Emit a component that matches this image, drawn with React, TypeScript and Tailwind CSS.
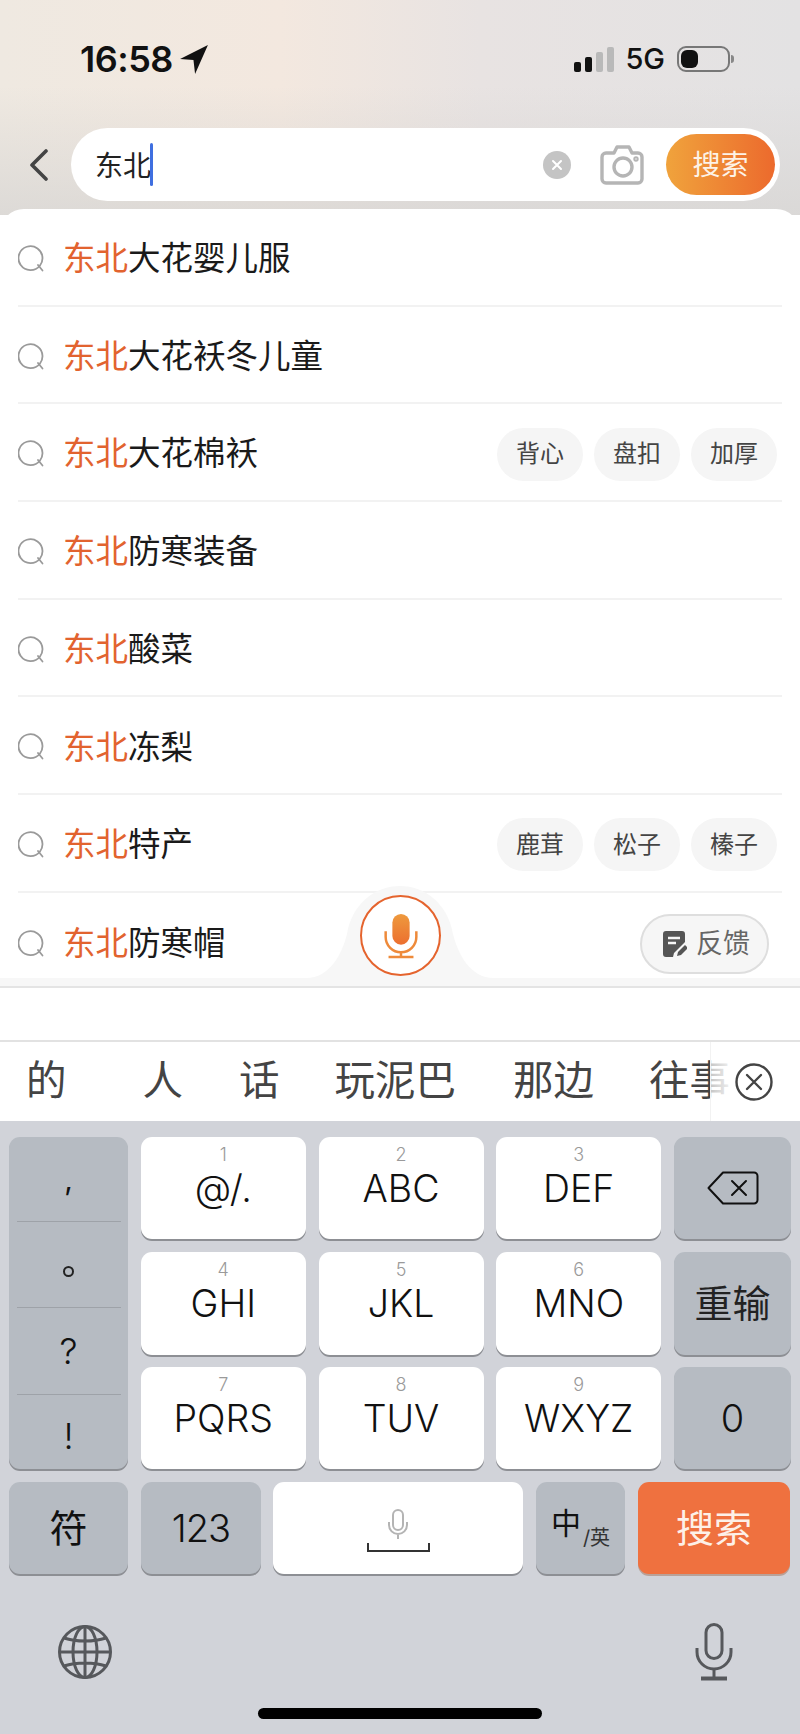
import type { ReactNode } from 'react'

const suggestions: { text: string; chips?: string[] }[] = [
  { text: '大花婴儿服' },
  { text: '大花袄冬儿童' },
  { text: '大花棉袄', chips: ['背心', '盘扣', '加厚'] },
  { text: '防寒装备' },
  { text: '酸菜' },
  { text: '冻梨' },
  { text: '特产', chips: ['鹿茸', '松子', '榛子'] },
  { text: '防寒帽' },
]

const letterKeys = [
  { n: '1', label: '@/.' },
  { n: '2', label: 'ABC' },
  { n: '3', label: 'DEF' },
  { n: '4', label: 'GHI' },
  { n: '5', label: 'JKL' },
  { n: '6', label: 'MNO' },
  { n: '7', label: 'PQRS' },
  { n: '8', label: 'TUV' },
  { n: '9', label: 'WXYZ' },
]

function SearchIcon() {
  return (
    <svg viewBox="0 0 28 28" className="w-[28px] h-[28px] shrink-0 mt-[2px]" fill="none" stroke="#9a9a9a" strokeWidth="1.8" strokeLinecap="round">
      <path d="M22 21.5A12 12 0 1 1 24.5 14a12 12 0 0 1-2.5 7.5" />
      <path d="M20 21l4.5 5.5" />
    </svg>
  )
}

function DarkKey({ className, children }: { className: string; children: ReactNode }) {
  return (
    <div className={`bg-[#b6bbc2] rounded-[11px] shadow-[0_2px_0_#8d8f94] flex items-center justify-center text-[#111] ${className}`}>
      {children}
    </div>
  )
}

function MicGlyph({ className, color }: { className: string; color: string }) {
  return (
    <svg viewBox="0 0 38 58" className={className} fill="none" stroke={color} strokeWidth="3">
      <rect x="11" y="1.5" width="16" height="34" rx="8" />
      <path d="M2 25v4a17 17 0 0 0 34 0v-4" />
      <path d="M19 46v8" />
      <path d="M6 55.5h26" strokeWidth="4" />
    </svg>
  )
}

function LetterKey({ n, label }: { n: string; label: string }) {
  return (
    <div className="bg-white rounded-[11px] shadow-[0_2px_0_#8d8f94] flex flex-col items-center pt-[8px]">
      <span className="text-[18px] leading-[20px] text-[#9a9a9a]">{n}</span>
      <span className="text-[37.5px] leading-[48px] text-[#111]">{label}</span>
    </div>
  )
}

export default function App() {
  return (
    <div className="relative w-[800px] h-[1734px] overflow-hidden flex flex-col bg-white text-[#111] font-['Inter','Noto_Sans_CJK_SC',sans-serif]">
      <div className="flex flex-col bg-[linear-gradient(180deg,rgba(224,222,220,0)_40%,rgba(216,214,212,0.8)_100%),linear-gradient(90deg,#efe9e1_0%,#f3e8df_35%,#e8e3e2_60%,#e3e2e3_100%)] bg-[length:100%_215px] bg-no-repeat">
        {/* status bar */}
        <div className="h-[128px] flex items-start justify-between pl-[80px] pr-[66px] pt-[39px]">
          <div className="flex items-center gap-[6px]">
            <span className="text-[36px] leading-[40px] font-semibold tracking-[-0.5px]">16:58</span>
            <svg viewBox="0 0 28 28" className="w-[30px] h-[30px]" fill="#111">
              <path d="M27 1L1 14l12.5 1L15 28z" />
            </svg>
          </div>
          <div className="flex items-center h-[40px]">
            <div className="flex items-end gap-[4px] h-[25px]">
              <div className="w-[7px] h-[10px] rounded-[2px] bg-[#111]" />
              <div className="w-[7px] h-[15px] rounded-[2px] bg-[#111]" />
              <div className="w-[7px] h-[20px] rounded-[2px] bg-[#b9b9b9]" />
              <div className="w-[7px] h-[25px] rounded-[2px] bg-[#b9b9b9]" />
            </div>
            <span className="ml-[11px] text-[29px] font-medium leading-[40px]">5G</span>
            <div className="ml-[12px] w-[53px] h-[26px] rounded-[9px] border-2 border-[#777] p-[2px] flex">
              <div className="w-[17px] h-full rounded-[6px] bg-[#111]" />
            </div>
            <div className="w-[3px] h-[8px] ml-[1px] rounded-r-full bg-[#888]" />
          </div>
        </div>

        {/* search row */}
        <div className="flex items-center pl-[29px] mb-[8px]">
          <svg viewBox="0 0 20 32" className="w-[20px] h-[32px]" fill="none" stroke="#444" strokeWidth="3.6" strokeLinecap="round" strokeLinejoin="round">
            <path d="M17 2L3 16l14 14" />
          </svg>
          <div className="ml-[22px] w-[709px] h-[73px] rounded-full bg-white flex items-center pl-[24px] pr-[5px]">
            <span className="text-[28px] leading-none text-[#222] mt-[2px]">东北</span>
            <div className="w-[3px] h-[43px] rounded-full bg-[#3f6fe0] -ml-[1px]" />
            <div className="ml-auto w-[28px] h-[28px] rounded-full bg-[#c4c4c4] flex items-center justify-center">
              <svg viewBox="0 0 12 12" className="w-[12px] h-[12px]" stroke="#fff" strokeWidth="2" strokeLinecap="round">
                <path d="M2 2l8 8M10 2l-8 8" />
              </svg>
            </div>
            <svg viewBox="0 0 44 40" className="ml-[29px] w-[44px] h-[40px]" fill="none" stroke="#b5b5b5" strokeWidth="3.4" strokeLinejoin="round">
              <path d="M6 8h8l3-6h12l3 6h6a4 4 0 0 1 4 4v22a4 4 0 0 1-4 4H6a4 4 0 0 1-4-4V12a4 4 0 0 1 4-4z" />
              <circle cx="23" cy="22" r="9" />
              <circle cx="36" cy="14" r="1" />
            </svg>
            <div className="ml-[22px] w-[109px] h-[61px] rounded-full bg-[linear-gradient(90deg,#f0a33c,#ec6a2d)] flex items-center justify-center text-[28px] text-[#fdf3e7]">
              搜索
            </div>
          </div>
        </div>

        {/* suggestion panel */}
        <div className="h-[769px] overflow-hidden rounded-t-[24px] bg-white">
          {suggestions.map((s, i) => (
            <div key={s.text} className={`mx-[18px] h-[97.7px] shrink-0 flex items-center ${i < 7 ? 'border-b-2 border-[#f2f2f2]' : ''}`}>
              <SearchIcon />
              <div className="ml-[17px] pt-[5px] text-[32.5px] leading-none text-[#1a1a1a]">
                <span className="text-[#e2632f]">东北</span>
                {s.text}
              </div>
              {s.chips && (
                <div className="ml-auto mr-[5px] mt-[4px] flex gap-[11px]">
                  {s.chips.map((c) => (
                    <div key={c} className="w-[86px] h-[53px] rounded-full bg-[#f5f5f5] flex items-center justify-center text-[24px] text-[#444]">
                      {c}
                    </div>
                  ))}
                </div>
              )}
            </div>
          ))}
        </div>
      </div>

      <div className="h-[10px] bg-[#f7f7f7] border-b-2 border-[#e4e4e4]" />
      <div className="h-[52px] bg-white" />

      {/* candidates */}
      <div className="relative h-[81px] bg-white border-t-2 border-[#e2e2e2] flex items-center text-[40.5px] leading-none text-[#444] overflow-hidden">
        <span className="ml-[26px]">的</span>
        <span className="ml-[76px]">人</span>
        <span className="ml-[56px]">话</span>
        <span className="ml-[55px]">玩泥巴</span>
        <span className="ml-[57px]">那边</span>
        <span className="ml-[55px] shrink-0">往事</span>
        <div className="absolute right-0 top-0 bottom-0 w-[90px] border-l border-[#f2f2f2] bg-[linear-gradient(90deg,rgba(255,255,255,0.7)_0%,#fff_30%)] flex items-center justify-end pr-[27px]">
          <svg viewBox="0 0 38 38" className="w-[38px] h-[38px]" fill="none" stroke="#444" strokeWidth="2.4" strokeLinecap="round">
            <circle cx="19" cy="19" r="17.5" />
            <path d="M12 12l14 14M26 12L12 26" />
          </svg>
        </div>
      </div>

      {/* keyboard */}
      <div className="flex-1 bg-[#d1d3d9] flex flex-col px-[9px] pt-[16px] font-light">
        <div className="grid grid-cols-[119px_165px_165px_165px_117px] grid-rows-[102px_103px_102px] gap-x-[12.75px] gap-y-[12.5px]">
          <DarkKey className="row-span-3 flex-col !justify-start">
            <div className="h-[85px] w-[104px] flex items-center justify-center text-[30px] font-normal border-b border-[#9ea2a8]">,</div>
            <div className="h-[86px] w-[104px] flex items-center justify-center border-b border-[#9ea2a8]">
              <div className="w-[11px] h-[11px] rounded-full border-2 border-[#222] mt-[14px]" />
            </div>
            <div className="h-[87px] w-[104px] flex items-center justify-center text-[36px] border-b border-[#9ea2a8]">?</div>
            <div className="h-[74px] w-[104px] flex items-center justify-center text-[36px] pt-[8px]">!</div>
          </DarkKey>
          {letterKeys.slice(0, 3).map((k) => (
            <LetterKey key={k.n} n={k.n} label={k.label} />
          ))}
          <DarkKey className="">
            <svg viewBox="0 0 52 34" className="w-[52px] h-[34px]" fill="none" stroke="#111" strokeWidth="2" strokeLinejoin="round" strokeLinecap="round">
              <path d="M16 1.5h31a3.5 3.5 0 0 1 3.5 3.5v24a3.5 3.5 0 0 1-3.5 3.5H16L1.5 17z" />
              <path d="M25 10l14 14M39 10L25 24" />
            </svg>
          </DarkKey>
          {letterKeys.slice(3, 6).map((k) => (
            <LetterKey key={k.n} n={k.n} label={k.label} />
          ))}
          <DarkKey className="text-[38px] font-normal text-[#222]">重输</DarkKey>
          {letterKeys.slice(6, 9).map((k) => (
            <LetterKey key={k.n} n={k.n} label={k.label} />
          ))}
          <DarkKey className="text-[38px]">0</DarkKey>
        </div>

        <div className="mt-[13px] h-[92px] flex">
          <DarkKey className="w-[119px] text-[38px] font-normal">符</DarkKey>
          <DarkKey className="ml-[13px] w-[120px] text-[38px] tracking-[-1px]">123</DarkKey>
          <div className="ml-[12px] w-[250px] rounded-[11px] bg-white shadow-[0_2px_0_#8d8f94] flex flex-col items-center justify-center pt-[4px]">
            <svg viewBox="0 0 22 30" className="w-[22px] h-[30px]" fill="none" stroke="#b4b4b4" strokeWidth="2">
              <rect x="6" y="1" width="10" height="20" rx="5" />
              <path d="M2 13v3a9 9 0 0 0 18 0v-3M11 25v5" />
            </svg>
            <div className="w-[63px] h-[9px] mt-[4px] border-2 border-t-0 border-[#333]" />
          </div>
          <DarkKey className="ml-[13px] w-[89px] items-start font-normal">
            <span className="text-[30px] leading-none mt-[26px]">中</span>
            <span className="text-[20px] leading-none mt-[46px] ml-[2px] text-[#333]">/英</span>
          </DarkKey>
          <div className="ml-[13px] w-[152px] rounded-[11px] bg-[#ef713f] shadow-[0_2px_0_#b9a198] flex items-center justify-center text-[38px] font-normal text-[#fdf0e8]">
            搜索
          </div>
        </div>

        <div className="mt-[49px] flex items-center justify-between pl-[49px] pr-[58px]">
          <svg viewBox="0 0 54 54" className="w-[54px] h-[54px]" fill="none" stroke="#56585c" strokeWidth="3">
            <circle cx="27" cy="27" r="25.5" />
            <ellipse cx="27" cy="27" rx="12" ry="25.5" />
            <path d="M27 1.5v51M1.5 27h51M6 13c12 4 30 4 42 0M6 41c12-4 30-4 42 0" />
          </svg>
          <MicGlyph className="w-[38px] h-[58px]" color="#56585c" />
        </div>

        <div className="mt-[27px] mx-auto w-[284px] h-[11px] rounded-full bg-black" />
      </div>

      {/* voice button */}
      <svg viewBox="0 0 200 94" className="absolute left-[300px] top-[884px] w-[200px] h-[94px]" fill="#f7f7f7">
        <path d="M6 94C30 94 42 70 47 50C52 20 75 2 100 2C125 2 148 20 153 50C158 70 170 94 194 94Z" />
      </svg>
      <div className="absolute left-[360px] top-[895px] w-[81px] h-[81px] rounded-full bg-white border-2 border-[#e5642e] flex items-center justify-center">
        <svg viewBox="0 0 36 48" className="w-[36px] h-[46px]">
          <defs>
            <linearGradient id="micFill" x1="0" y1="0" x2="0" y2="1">
              <stop offset="0%" stopColor="#ee9a3e" />
              <stop offset="100%" stopColor="#ec6f2f" />
            </linearGradient>
          </defs>
          <rect x="9" y="1" width="18" height="32" rx="9" fill="url(#micFill)" />
          <path d="M2 19v6a16 16 0 0 0 32 0v-6M18 41v4M5 46h26" fill="none" stroke="#ee8a3a" strokeWidth="2.6" />
        </svg>
      </div>

      {/* feedback */}
      <div className="absolute left-[640px] top-[914px] w-[129px] h-[60px] rounded-full bg-[#f6f6f6] border-2 border-[#dedede] flex items-center justify-center gap-[9px] pl-[4px] text-[27px] text-[#666]">
        <svg viewBox="0 0 24 26" className="w-[24px] h-[26px]">
          <path d="M3 0h16a3 3 0 0 1 3 3v8L11 22l-1 4H3a3 3 0 0 1-3-3V3a3 3 0 0 1 3-3z" fill="#555" />
          <path d="M5 7h12M5 12h8" stroke="#f6f6f6" strokeWidth="2.4" />
          <path d="M14 25l1-4 7-7 3 3-7 7z" fill="#555" />
        </svg>
        反馈
      </div>
    </div>
  )
}
